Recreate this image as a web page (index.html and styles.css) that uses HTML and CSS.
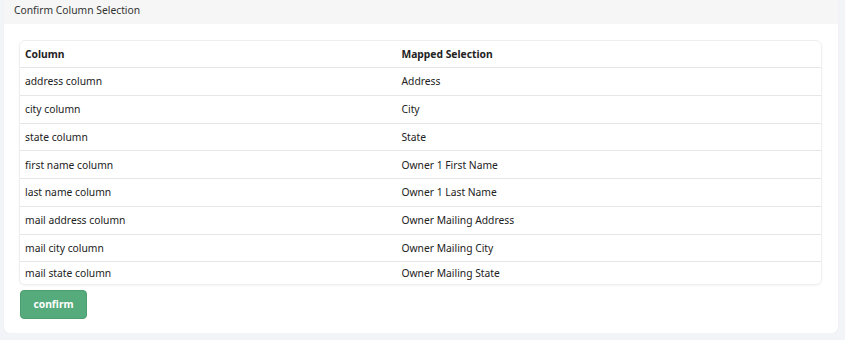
FILE: index.html
```html
<!DOCTYPE html>
<html>
<head>
<meta charset="utf-8">
<link rel="stylesheet" href="styles.css">
</head>
<body>
<div class="card">
  <div class="card-header">Confirm Column Selection</div>
  <div class="card-body">
    <div class="table-wrap">
      <table class="map-table">
        <thead>
          <tr><th class="col-a">Column</th><th>Mapped Selection</th></tr>
        </thead>
        <tbody>
          <tr><td>address column</td><td>Address</td></tr>
          <tr><td>city column</td><td>City</td></tr>
          <tr><td>state column</td><td>State</td></tr>
          <tr><td>first name column</td><td>Owner 1 First Name</td></tr>
          <tr><td>last name column</td><td>Owner 1 Last Name</td></tr>
          <tr><td>mail address column</td><td>Owner Mailing Address</td></tr>
          <tr><td>mail city column</td><td>Owner Mailing City</td></tr>
          <tr class="last-row"><td>mail state column</td><td>Owner Mailing State</td></tr>
        </tbody>
      </table>
    </div>
    <button class="btn-confirm">confirm</button>
  </div>
</div>
</body>
</html>
```
FILE: styles.css
```css
html, body {
  margin: 0;
  padding: 0;
}
body {
  background: #f3f4f7;
  font-family: "Noto Sans", "Open Sans", sans-serif;
  font-size: 10.3px;
  color: #222;
}
.card {
  margin: 0 7px 0 4px;
  background: #fff;
  border-radius: 0 0 6px 6px;
  box-shadow: 0 1px 2px rgba(0,0,0,0.04);
  height: 333px;
  box-sizing: border-box;
  display: flex;
  flex-direction: column;
}
.card-header {
  background: #f6f6f6;
  height: 24px;
  line-height: 21px;
  padding-left: 10px;
  color: #333;
  flex: none;
}
.card-body {
  padding: 16px 16px 15px 15px;
}
.table-wrap {
  border: 1px solid #efefef;
  border-radius: 6px;
  box-shadow: 0 1px 2px rgba(0,0,0,0.05);
  overflow: hidden;
}
.map-table {
  width: 100%;
  border-collapse: collapse;
}
.map-table th, .map-table td {
  text-align: left;
  padding: 0 5px;
  height: 27.75px;
  box-sizing: border-box;
  border-bottom: 1px solid #e6e6e6;
  vertical-align: middle;
}
.map-table th {
  font-weight: 700;
  height: 26.5px;
  color: #222;
}
.map-table .last-row td {
  height: 22px;
  border-bottom: none;
}
.col-a {
  width: 47%;
}
.btn-confirm {
  display: block;
  margin-top: 5px;
  width: 67px;
  height: 29px;
  background: #55ab7b;
  border: 1px solid #4c9e70;
  border-radius: 4px;
  color: #fff;
  font-family: inherit;
  font-weight: 700;
  font-size: 10.3px;
  margin-left: 1px;
  padding: 0;
}
```
